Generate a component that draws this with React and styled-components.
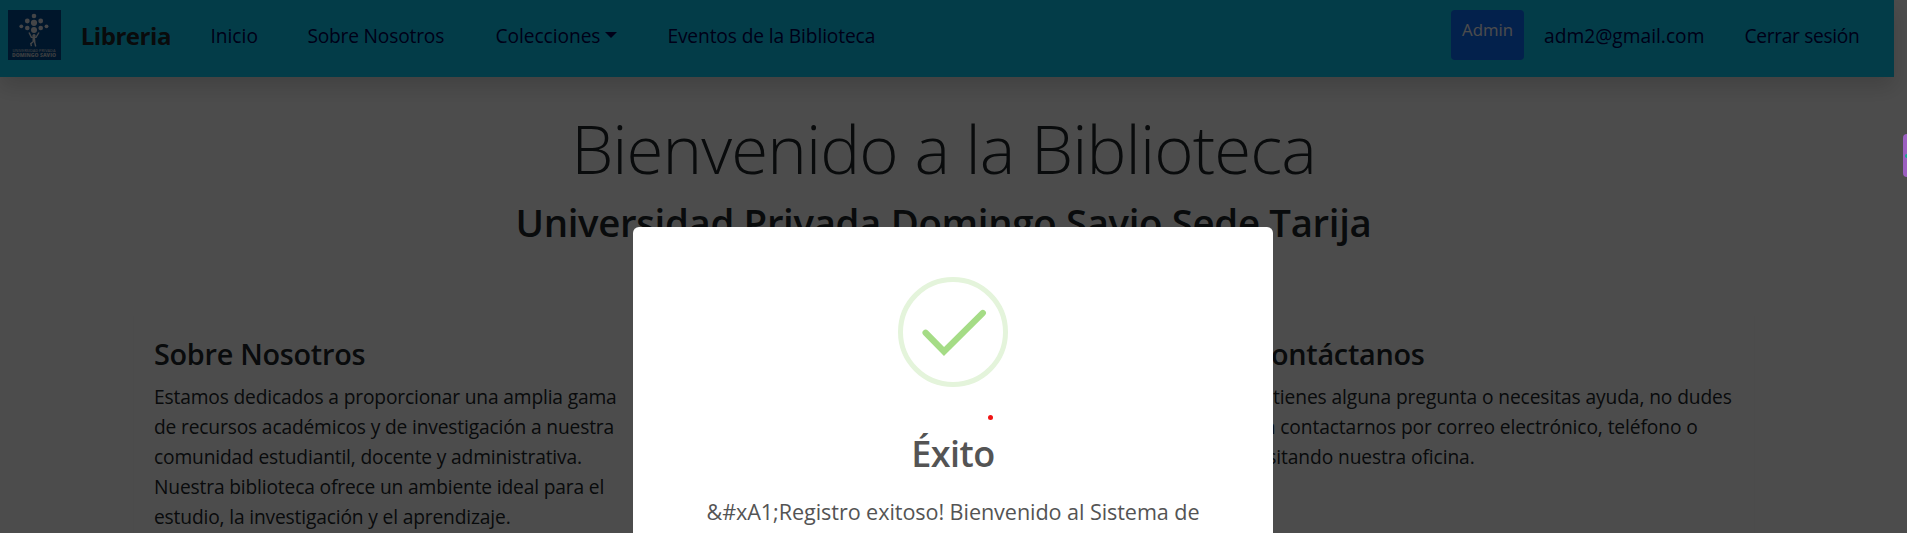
import React from "react";
import styled, { createGlobalStyle } from "styled-components";

const Global = createGlobalStyle`
  * { box-sizing: border-box; }
  html, body { margin: 0; height: 100%; overflow: hidden; background: #fff; }
  body { font-family: "Open Sans", "Noto Sans", sans-serif; font-size: 19.2px; line-height: 30px; color: #212529; }
  h1, h2, h3, p { margin: 0; }
`;

const Page = styled.div`
  width: 1894px;
  height: 533px;
`;

const Navbar = styled.nav`
  display: flex;
  align-items: flex-start;
  justify-content: space-between;
  height: 77px;
  padding: 10px 0 17px 8px;
  background: #0dcaf0;
  box-shadow: 0 10px 20px rgba(0, 0, 0, 0.15);
`;

const NavGroup = styled.div`
  display: flex;
  align-items: center;
  height: 50px;
`;

const Logo = styled.svg`
  display: block;
  width: 53px;
  height: 50px;
  margin-right: 19.7px;
`;

const Brand = styled.a`
  width: 129.7px;
  padding-top: 1px;
  font-size: 24px;
  font-weight: 700;
  letter-spacing: -0.45px;
  color: #212529;
`;

const NavLink = styled.a`
  width: ${(p) => p.$w}px;
  padding-top: 1px;
  letter-spacing: ${(p) => p.$track || 0}px;
  white-space: nowrap;
  color: #000050;
`;

const Caret = styled.span`
  display: inline-block;
  margin-left: 5px;
  vertical-align: 5px;
  border-top: 6px solid currentColor;
  border-left: 6px solid transparent;
  border-right: 6px solid transparent;
`;

const AdminButton = styled.button`
  width: 73px;
  height: 50px;
  margin-right: 20px;
  padding: 7px 0 18px;
  border: 0;
  border-radius: 4px;
  background: #0d6efd;
  color: #fff;
  font: 400 16.8px/25px "Open Sans", sans-serif;
`;

const Hero = styled.header`
  padding: 28.5px 7px 0 0;
  text-align: center;
  white-space: nowrap;
`;

const Display = styled.h1`
  margin-bottom: 8px;
  font-size: 67.2px;
  line-height: 84px;
  font-weight: 300;
  letter-spacing: -0.92px;
`;

const Subtitle = styled.h2`
  font-size: 38.4px;
  line-height: 48px;
  font-weight: 600;
  letter-spacing: -0.344px;
`;

const Cards = styled.main`
  display: grid;
  grid-template-columns: 523px 523px 523px;
  gap: 26.5px;
  margin: 70px 0 0 133px;
`;

const Card = styled.section`
  height: 217px;
  padding: 20px;
  border-left: 1px solid #fafafa;
  border-right: 1px solid #fafafa;
  background: #fff;
  box-shadow: ${(p) => (p.$raised ? "0 20px 20px 22px rgba(0, 0, 0, 0.15)" : "none")};
`;

const CardTitle = styled.h3`
  margin-bottom: 10px;
  font-size: 28.8px;
  line-height: 36px;
  font-weight: 600;
  letter-spacing: -0.27px;
`;

const CardText = styled.p`
  letter-spacing: ${(p) => p.$track}px;
  white-space: nowrap;
`;

const Overlay = styled.div`
  position: fixed;
  inset: 0;
  display: flex;
  justify-content: center;
  padding: 227px 1px 0 0;
  background: rgba(0, 0, 0, 0.7);
`;

const Modal = styled.div`
  display: flex;
  flex-direction: column;
  align-items: center;
  width: 640px;
  height: 306px;
  padding-top: 50px;
  border-radius: 6px 6px 0 0;
  background: #fff;
  color: #545454;
`;

const SuccessIcon = styled.svg`
  width: 110px;
  height: 110px;
`;

const Recording = styled.i`
  width: 5px;
  height: 5px;
  margin: 28px 0 0 74px;
  border-radius: 50%;
  background: #f01414;
`;

const ModalTitle = styled.div`
  margin-top: 11px;
  font-size: 36px;
  line-height: 46px;
  font-weight: 600;
  letter-spacing: -0.5px;
`;

const ModalText = styled.div`
  margin-top: 18px;
  font-size: 21.6px;
  line-height: 34px;
  letter-spacing: -0.071px;
  white-space: nowrap;
`;

const SideTab = styled.div`
  position: fixed;
  top: 134px;
  right: 0;
  display: flex;
  align-items: center;
  justify-content: flex-end;
  width: 4px;
  height: 43px;
  border-radius: 4px 0 0 4px;
  background: #9b5fc0;
`;

const TabDot = styled.i`
  width: 2px;
  height: 4px;
  border-radius: 2px 0 0 2px;
  background: #12a594;
`;

function LogoMark() {
  return (
    <Logo viewBox="0 0 53 50">
      <rect width="53" height="50" fill="#004a92" />
      <g fill="#e4e8ee">
        <circle cx="26" cy="6" r="2.3" />
        <circle cx="19.3" cy="11" r="2.4" />
        <circle cx="32.7" cy="11" r="2.4" />
        <circle cx="26" cy="12.8" r="3.1" />
        <circle cx="13.3" cy="16.3" r="1.9" />
        <circle cx="38.5" cy="16.3" r="1.9" />
        <circle cx="19.3" cy="18" r="2.3" />
        <circle cx="32.7" cy="18" r="2.3" />
        <circle cx="26" cy="20" r="3" />
        <circle cx="26" cy="25.6" r="1.6" />
      </g>
      <path d="M21 22.5l2.4 4.8h4.6l3-4.8M25.2 27.5v4.8M26.3 27.5l.5 4.5M24.8 32l-2 1.6.6 2.6M26.5 31.5l1.2 5" fill="none" stroke="#e4e8ee" strokeWidth="1.4" />
      <g fill="#c3cad4" fontFamily="Open Sans, sans-serif" textAnchor="middle">
        <text x="26" y="41.5" fontSize="3.4" fontWeight="600" textLength="43" lengthAdjust="spacingAndGlyphs">UNIVERSIDAD PRIVADA</text>
        <text x="26" y="46.7" fontSize="4.9" fontWeight="800" textLength="44" lengthAdjust="spacingAndGlyphs">DOMINGO SAVIO</text>
      </g>
    </Logo>
  );
}

export default function App() {
  return (
    <>
      <Global />
      <Page>
        <Navbar>
          <NavGroup>
            <LogoMark />
            <Brand>Libreria</Brand>
            <NavLink $w={97}>Inicio</NavLink>
            <NavLink $w={188} $track={-0.193}>Sobre Nosotros</NavLink>
            <NavLink $w={172} $track={-0.056}>Colecciones<Caret /></NavLink>
            <NavLink $w={210} $track={-0.13}>Eventos de la Biblioteca</NavLink>
          </NavGroup>
          <NavGroup>
            <AdminButton>Admin</AdminButton>
            <NavLink $w={200.5}>adm2@gmail.com</NavLink>
            <NavLink $w={149.5} $track={-0.33}>Cerrar sesión</NavLink>
          </NavGroup>
        </Navbar>
        <Hero>
          <Display>Bienvenido a la Biblioteca</Display>
          <Subtitle>Universidad Privada Domingo Savio Sede Tarija</Subtitle>
        </Hero>
        <Cards>
          <Card>
            <CardTitle>Sobre Nosotros</CardTitle>
            <CardText $track={-0.155}>
              Estamos dedicados a proporcionar una amplia gama<br />
              de recursos académicos y de investigación a nuestra<br />
              comunidad estudiantil, docente y administrativa.<br />
              Nuestra biblioteca ofrece un ambiente ideal para el<br />
              estudio, la investigación y el aprendizaje.
            </CardText>
          </Card>
          <Card $raised />
          <Card>
            <CardTitle>Contáctanos</CardTitle>
            <CardText $track={-0.095}>
              Si tienes alguna pregunta o necesitas ayuda, no dudes<br />
              en contactarnos por correo electrónico, teléfono o<br />
              visitando nuestra oficina.
            </CardText>
          </Card>
        </Cards>
      </Page>
      <Overlay>
        <Modal>
          <SuccessIcon viewBox="0 0 110 110">
            <circle cx="55" cy="55" r="52.5" fill="none" stroke="#e4f4db" strokeWidth="5" />
            <path d="M27.6 55.7L46 74.5L84.8 36" fill="none" stroke="#a5dc86" strokeWidth="6.25" strokeLinecap="round" />
          </SuccessIcon>
          <Recording />
          <ModalTitle>Éxito</ModalTitle>
          <ModalText>&amp;#xA1;Registro exitoso! Bienvenido al Sistema de</ModalText>
        </Modal>
      </Overlay>
      <SideTab><TabDot /></SideTab>
    </>
  );
}
